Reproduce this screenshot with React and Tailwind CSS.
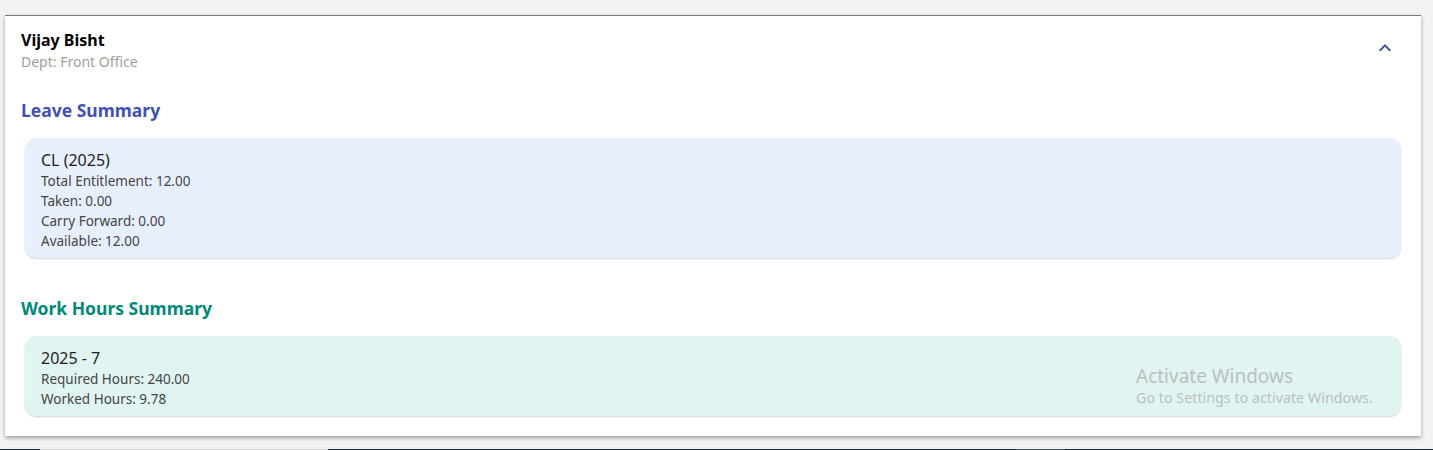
import React from "react";

const font = { fontFamily: '"Noto Sans", "Open Sans", sans-serif' };

function SummaryCard({ bg, title, lines }) {
  return (
    <div className={`ml-[4px] rounded-[12px] ${bg} px-4 pt-[11px] pb-[7px] shadow-[0_1px_2px_rgba(0,0,0,0.18)]`}>
      <div className="text-[16px] leading-[22px] text-[#1f1f1f]">{title}</div>
      {lines.map((l) => (
        <div key={l} className="text-[13.5px] leading-[20px] text-[#444444]">
          {l}
        </div>
      ))}
    </div>
  );
}

export default function App() {
  return (
    <div
      className="relative flex h-[450px] w-full flex-col bg-[#f3f3f3] pl-[5px] pr-[12px] pt-[15px]"
      style={font}
    >
      <div className="border-t border-[#7a7a7a] bg-white px-4 pb-[20px] shadow-[0_2px_4px_rgba(0,0,0,0.35)]">
        <div className="flex items-start justify-between pt-[14px]">
          <div>
            <div className="text-[16px] font-bold leading-[20px] text-black">Vijay Bisht</div>
            <div className="text-[14px] leading-[24px] text-[#9e9e9e]">Dept: Front Office</div>
          </div>
          <div className="mr-[8px] mt-[6px] flex h-[24px] w-[24px] items-center justify-center">
            <svg viewBox="0 0 24 24" width="24" height="24" fill="#3f5597">
              <path d="M12 8l-6 6 1.41 1.41L12 10.83l4.59 4.58L18 14z" />
            </svg>
          </div>
        </div>

        <div className="mt-[24px] text-[17.5px] font-bold leading-[24px] text-[#3f51b5]">Leave Summary</div>
        <div className="mt-[16px] mr-[4px]">
          <SummaryCard
            bg="bg-[#e8effc]"
            title="CL (2025)"
            lines={[
              "Total Entitlement: 12.00",
              "Taken: 0.00",
              "Carry Forward: 0.00",
              "Available: 12.00",
            ]}
          />
        </div>

        <div className="mt-[38px] text-[17.5px] font-bold leading-[24px] text-[#00897b]">Work Hours Summary</div>
        <div className="mt-[16px] mr-[4px]">
          <SummaryCard
            bg="bg-[#e0f5f2]"
            title="2025 - 7"
            lines={["Required Hours: 240.00", "Worked Hours: 9.78"]}
          />
        </div>
      </div>

      <div className="flex-1" />
      <div className="-ml-[5px] -mr-[12px] flex h-[1px]">
        <div className="w-[40px] bg-[#1b2b34]" />
        <div className="w-[288px] bg-[#cfcfcf]" />
        <div className="w-[688px] bg-[#1b2b34]" />
        <div className="w-[49px] bg-[#4d5c62]" />
        <div className="flex-1 bg-[#1b2b34]" />
      </div>

      <div className="pointer-events-none absolute left-[1136px] top-[364px] text-[#b9c0bf]">
        <div className="text-[19px] leading-[24px]">Activate Windows</div>
        <div className="text-[14.3px] leading-[20px]">Go to Settings to activate Windows.</div>
      </div>
    </div>
  );
}
